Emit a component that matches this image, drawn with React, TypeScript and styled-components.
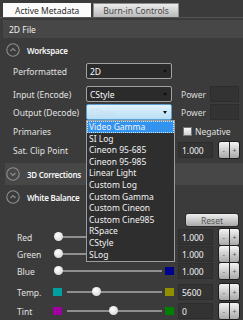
import React from "react";
import styled, { createGlobalStyle } from "styled-components";

const GlobalStyle = createGlobalStyle`
  html, body { margin: 0; padding: 0; background: #3b3b3b; }
  body { font-family: "Noto Sans", "Open Sans", sans-serif; }
  * { box-sizing: border-box; }
`;

const Panel = styled.div`
  position: relative;
  width: 243px;
  height: 320px;
  overflow: hidden;
  background: #3b3b3b;
  font-size: 8.5px;
  color: #e2e2e2;
  display: flex;
  flex-direction: column;
`;

const TabBar = styled.div`
  height: 18px;
  padding: 3px 0 0 3px;
  display: flex;
  gap: 2px;
  border-bottom: 1px solid #555;
`;

const Tab = styled.div<{ $active?: boolean }>`
  height: 14px;
  padding: 0 ${(p) => (p.$active ? 11 : 9)}px;
  display: flex;
  align-items: center;
  color: ${(p) => (p.$active ? "#2e2e2e" : "#474747")};
  background: ${(p) =>
    p.$active ? "#fbfbfb" : "linear-gradient(#ececec, #b9b9b9)"};
  border: 1px solid ${(p) => (p.$active ? "#fbfbfb" : "#8c8c8c")};
  border-bottom: none;
`;

const FileBar = styled.div`
  margin: 2px 0 0 3px;
  height: 18px;
  display: flex;
  align-items: center;
  padding-left: 6px;
  background: #474747;
  color: #f0f0f0;
`;

const SectionHead = styled.div<{ $top: number; $band?: boolean }>`
  margin-top: ${(p) => p.$top}px;
  margin-left: ${(p) => (p.$band ? 5 : 0)}px;
  height: ${(p) => (p.$band ? 22 : 18)}px;
  display: flex;
  align-items: center;
  gap: 7px;
  padding-left: ${(p) => (p.$band ? 1 : 6)}px;
  background: ${(p) => (p.$band ? "#474747" : "transparent")};
  color: #f6f6f6;
  font-size: 8px;
  font-weight: 600;
  letter-spacing: -0.25px;
`;

const Row = styled.div<{ $top: number; $h?: number }>`
  margin-top: ${(p) => p.$top}px;
  height: ${(p) => p.$h ?? 16}px;
  display: flex;
  align-items: center;
`;

const Label = styled.div`
  width: 86px;
  padding-left: 13px;
  flex: none;
`;

const Select = styled.div<{ $focus?: boolean }>`
  width: 86px;
  height: 16px;
  display: flex;
  align-items: center;
  justify-content: space-between;
  padding: 0 4px 0 3px;
  border-radius: 2px;
  border: 1px solid ${(p) => (p.$focus ? "#5b9fd4" : "#a2a2a2")};
  background: ${(p) =>
    p.$focus ? "linear-gradient(#e2f3fc, #b7def5)" : "#2b2b2b"};
  color: ${(p) => (p.$focus ? "#c9dfee" : "#fafafa")};
`;

const Arrow = styled.span`
  width: 0;
  height: 0;
  border-left: 2.5px solid transparent;
  border-right: 2.5px solid transparent;
  border-top: 3px solid #101010;
`;

const SideLabel = styled.div`
  margin-left: 9px;
  width: 29px;
  color: #dcdcdc;
`;

const DarkBox = styled.div<{ $w: number }>`
  width: ${(p) => p.$w}px;
  height: 16px;
  padding-left: 3px;
  display: flex;
  align-items: center;
  background: #333;
  border: 1px solid #2d2d2d;
  color: #f4f4f4;
  flex: none;
`;

const Check = styled.span`
  width: 9px;
  height: 9px;
  margin: 0 3px 0 0;
  border: 1px solid #777;
  background: linear-gradient(#fafafa, #d0d0d0);
`;

const Right = styled.div<{ $x: number }>`
  margin-left: ${(p) => p.$x}px;
  display: flex;
  align-items: center;
`;

const StepPair = styled.div`
  margin-left: 5px;
  display: flex;
  border: 1px solid #1e1e1e;
  border-radius: 3px;
  overflow: hidden;
`;

const StepBtn = styled.div`
  width: 10px;
  height: 16px;
  display: flex;
  align-items: center;
  justify-content: center;
  font-size: 7px;
  color: #555;
  background: linear-gradient(#f4f4f4, #a8a8a8);
  & + & { border-left: 1px solid #2a2a2a; }
`;

const ResetBtn = styled.div`
  margin-left: 185px;
  width: 54px;
  height: 14px;
  display: flex;
  align-items: center;
  justify-content: center;
  border: 1px solid #2a2a2a;
  border-radius: 3px;
  background: linear-gradient(#efefef, #a9a9a9);
  color: #555;
`;

const SliderLabel = styled.div`
  width: 53px;
  padding-left: 17px;
  flex: none;
`;

const Swatch = styled.span<{ $c: string }>`
  width: 9px;
  height: 8px;
  flex: none;
  background: ${(p) => p.$c};
`;

const Track = styled.div<{ $w: number; $ml: number }>`
  position: relative;
  width: ${(p) => p.$w}px;
  height: 2px;
  margin: 0 3px 0 ${(p) => p.$ml}px;
  background: #8f8f8f;
  flex: none;
`;

const Knob = styled.span`
  position: absolute;
  top: -4px;
  width: 9px;
  height: 9px;
  margin-left: -4.5px;
  border-radius: 50%;
  background: radial-gradient(circle at 40% 35%, #ffffff, #cfcfcf);
`;

const Drop = styled.div`
  position: absolute;
  left: 86px;
  top: 120px;
  width: 89px;
  border: 1px solid #9c9c9c;
  background: #2e2e2e;
  padding-bottom: 1px;
`;

const DropItem = styled.div<{ $sel?: boolean }>`
  height: 11.6px;
  line-height: 11.6px;
  padding-left: 2px;
  color: #f2f2f2;
  white-space: nowrap;
  background: ${(p) => (p.$sel ? "#3394f0" : "transparent")};
  outline: ${(p) => (p.$sel ? "1px dotted #cfe6ff" : "none")};
  outline-offset: -1px;
`;

const Toggle = ({ down }: { down?: boolean }) => (
  <svg width="14" height="14" viewBox="0 0 14 14">
    <circle cx="7" cy="7" r="6.2" fill="none" stroke="#8e8e8e" strokeWidth="1.1" />
    <path
      d={down ? "M4.5 6 L7 8.5 L9.5 6" : "M4.5 8 L7 5.5 L9.5 8"}
      fill="none"
      stroke="#8e8e8e"
      strokeWidth="1.1"
    />
  </svg>
);

const Steps = () => (
  <StepPair>
    <StepBtn>-</StepBtn>
    <StepBtn>+</StepBtn>
  </StepPair>
);

const options = [
  "Video Gamma",
  "SI Log",
  "Cineon 95-685",
  "Cineon 95-985",
  "Linear Light",
  "Custom Log",
  "Custom Gamma",
  "Custom Cineon",
  "Custom Cine985",
  "RSpace",
  "CStyle",
  "SLog",
];

type Slide = {
  name: string;
  top: number;
  left?: string;
  right: string;
  pos: number;
  value: string;
};

const slides: Slide[] = [
  { name: "Red", top: 2, right: "#b00000", pos: 2, value: "1.000" },
  { name: "Green", top: 1, right: "#008000", pos: 2, value: "1.000" },
  { name: "Blue", top: 1, right: "#00008e", pos: 2, value: "1.000" },
  { name: "Temp.", top: 5, left: "#00a0a0", right: "#8f8f00", pos: 31, value: "5600" },
  { name: "Tint", top: 3, left: "#a000a0", right: "#008000", pos: 49, value: "0" },
];

const App = () => (
  <>
    <GlobalStyle />
    <Panel>
      <TabBar>
        <Tab $active>Active Metadata</Tab>
        <Tab>Burn-in Controls</Tab>
      </TabBar>
      <FileBar>2D File</FileBar>
      <SectionHead $top={3}>
        <Toggle />
        Workspace
      </SectionHead>
      <Row $top={4}>
        <Label>Performatted</Label>
        <Select>
          2D
          <Arrow />
        </Select>
      </Row>
      <Row $top={7}>
        <Label>Input (Encode)</Label>
        <Select>
          CStyle
          <Arrow />
        </Select>
        <SideLabel>Power</SideLabel>
        <DarkBox $w={29} />
      </Row>
      <Row $top={2}>
        <Label>Output (Decode)</Label>
        <Select $focus>
          CStyle
          <Arrow />
        </Select>
        <SideLabel>Power</SideLabel>
        <DarkBox $w={29} />
      </Row>
      <Row $top={3}>
        <Label>Primaries</Label>
        <Right $x={97}>
          <Check />
          Negative
        </Right>
      </Row>
      <Row $top={3}>
        <Label>Sat. Clip Point</Label>
        <Right $x={92}>
          <DarkBox $w={35}>1.000</DarkBox>
          <Steps />
        </Right>
      </Row>
      <SectionHead $top={5} $band>
        <Toggle down />
        3D Corrections
      </SectionHead>
      <SectionHead $top={3}>
        <Toggle />
        White Balance
      </SectionHead>
      <Row $top={7} $h={14}>
        <ResetBtn>Reset</ResetBtn>
      </Row>
      {slides.map((s) => (
        <Row key={s.name} $top={s.top}>
          <SliderLabel>{s.name}</SliderLabel>
          {s.left && <Swatch $c={s.left} />}
          <Track $w={s.left ? 95 : 106} $ml={s.left ? 5 : 3}>
            <Knob style={{ left: `${s.pos}%` }} />
          </Track>
          <Swatch $c={s.right} />
          <Right $x={4}>
            <DarkBox $w={35}>{s.value}</DarkBox>
            <Steps />
          </Right>
        </Row>
      ))}
      <Drop>
        {options.map((o, i) => (
          <DropItem key={o} $sel={i === 0}>
            {o}
          </DropItem>
        ))}
      </Drop>
    </Panel>
  </>
);

export default App;
